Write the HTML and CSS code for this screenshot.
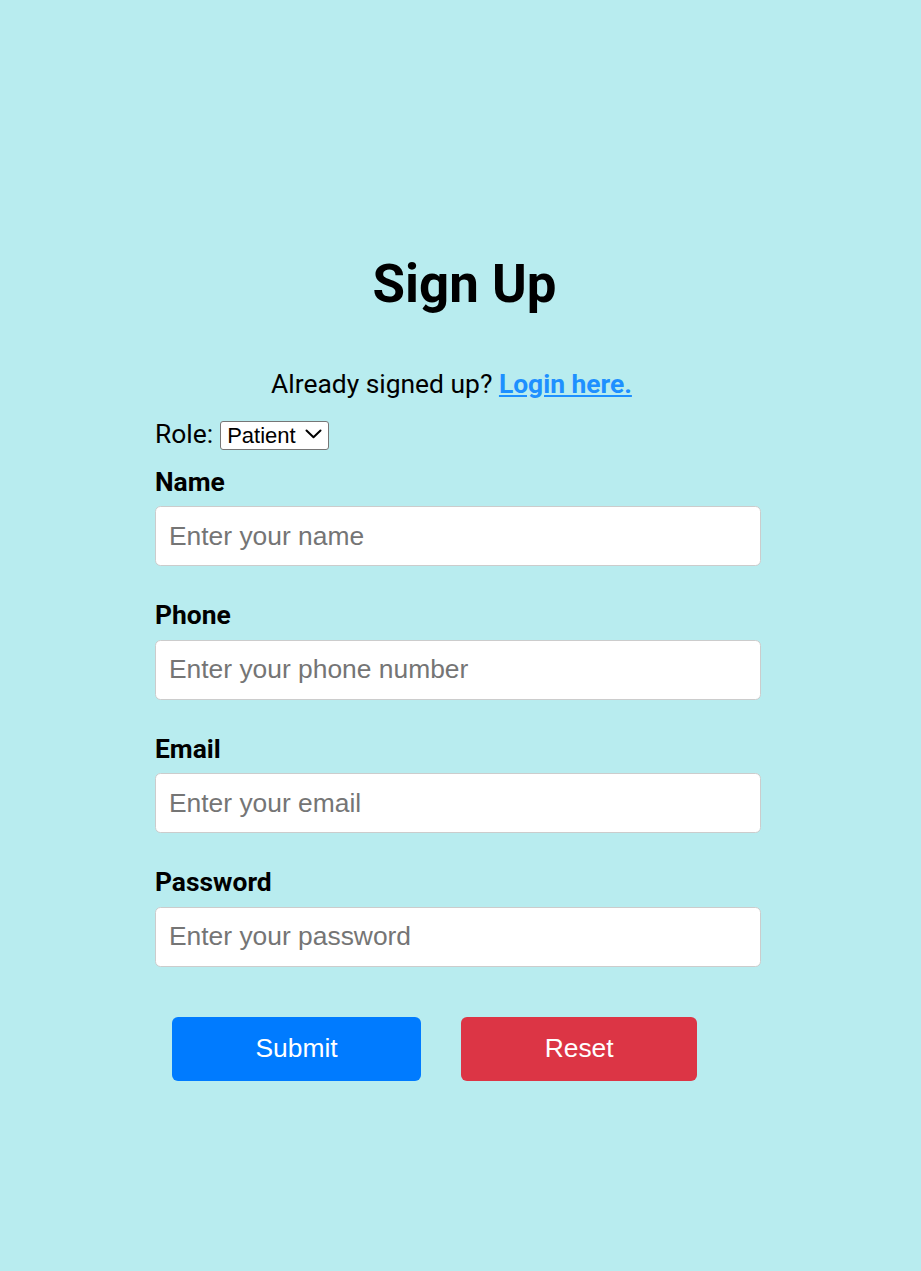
FILE: index.html
```html
<!DOCTYPE html>
<html lang="en">
<head>
<meta charset="utf-8">
<title>Sign Up</title>
<link rel="stylesheet" href="styles.css">
</head>
<body>
<main class="page">
  <section class="signup">
    <h1 class="title">Sign Up</h1>
    <p class="login-note">Already signed up? <a class="login-link" href="#">Login here.</a></p>
    <form class="form">
      <div class="role-row">
        <span class="role-label">Role:</span>
        <span class="select-wrap">
          <select class="role-select">
            <option>Patient</option>
            <option>Doctor</option>
          </select>
          <svg class="select-chevron" width="17" height="10" viewBox="0 0 17 10" aria-hidden="true">
            <path d="M1.5 1.5 L8.5 8.3 L15.5 1.5" fill="none" stroke="#000" stroke-width="2" stroke-linecap="round" stroke-linejoin="round"/>
          </svg>
        </span>
      </div>
      <div class="field">
        <label class="field-label" for="name">Name</label>
        <input class="field-input" id="name" type="text" placeholder="Enter your name">
      </div>
      <div class="field">
        <label class="field-label" for="phone">Phone</label>
        <input class="field-input" id="phone" type="tel" placeholder="Enter your phone number">
      </div>
      <div class="field">
        <label class="field-label" for="email">Email</label>
        <input class="field-input" id="email" type="email" placeholder="Enter your email">
      </div>
      <div class="field">
        <label class="field-label" for="password">Password</label>
        <input class="field-input" id="password" type="password" placeholder="Enter your password">
      </div>
      <div class="actions">
        <button class="btn btn-submit" type="submit">Submit</button>
        <button class="btn btn-reset" type="reset">Reset</button>
      </div>
    </form>
  </section>
</main>
</body>
</html>
```

FILE: styles.css
```css
html, body {
  margin: 0;
  padding: 0;
  background: #b8ecef;
}

body {
  font-family: Roboto, "Liberation Sans", sans-serif;
  font-size: 26.4px;
  color: #000;
  min-height: 1271px;
}

.page {
  padding-top: 253px;
}

.signup {
  width: 606px;
  margin-left: 155px;
}

.title {
  margin: 0;
  font-size: 52.8px;
  font-weight: 700;
  line-height: normal;
  text-align: center;
  padding-left: 13px;
}

.login-note {
  margin: 53.6px 0 0;
  text-align: center;
  padding-right: 13px;
  line-height: normal;
}

.login-link {
  color: #1e90ff;
  font-weight: 700;
  text-decoration: underline;
}

.form {
  margin: 0;
}

.role-row {
  display: flex;
  align-items: center;
  gap: 7px;
  margin-top: 20px;
}

.select-wrap {
  position: relative;
  display: inline-block;
  height: 29px;
}

.role-select {
  appearance: none;
  -webkit-appearance: none;
  box-sizing: border-box;
  width: 109px;
  height: 29px;
  padding: 0 0 0 6px;
  border: 1px solid #767676;
  border-radius: 3px;
  background: #fff;
  font-family: "Liberation Sans", Arial, sans-serif;
  font-size: 22px;
  color: #000;
  outline: none;
}

.select-chevron {
  position: absolute;
  top: 10px;
  right: 7px;
  pointer-events: none;
}

.field {
  margin-top: 0;
  margin-bottom: 33.9px;
}

.role-row + .field {
  margin-top: 18px;
}

.field-label {
  display: block;
  font-weight: 700;
  line-height: normal;
  margin-bottom: 9.6px;
}

.field-input {
  display: block;
  box-sizing: border-box;
  width: 606px;
  height: 60px;
  padding: 0 13px;
  border: 1px solid #cccccc;
  border-radius: 5.5px;
  background: #fff;
  font-family: "Liberation Sans", Arial, sans-serif;
  font-size: 26.4px;
  color: #000;
  outline: none;
}

.field-input::placeholder {
  color: #757575;
}

.actions {
  display: flex;
  gap: 40px;
  margin-top: 50px;
  padding-left: 17px;
}

.btn {
  height: 64px;
  padding: 0 83.5px;
  border: none;
  border-radius: 6px;
  color: #fff;
  font-family: "Liberation Sans", Arial, sans-serif;
  font-size: 26.4px;
  cursor: pointer;
}

.btn-submit {
  background: #007bff;
}

.btn-reset {
  background: #dc3545;
}
```
